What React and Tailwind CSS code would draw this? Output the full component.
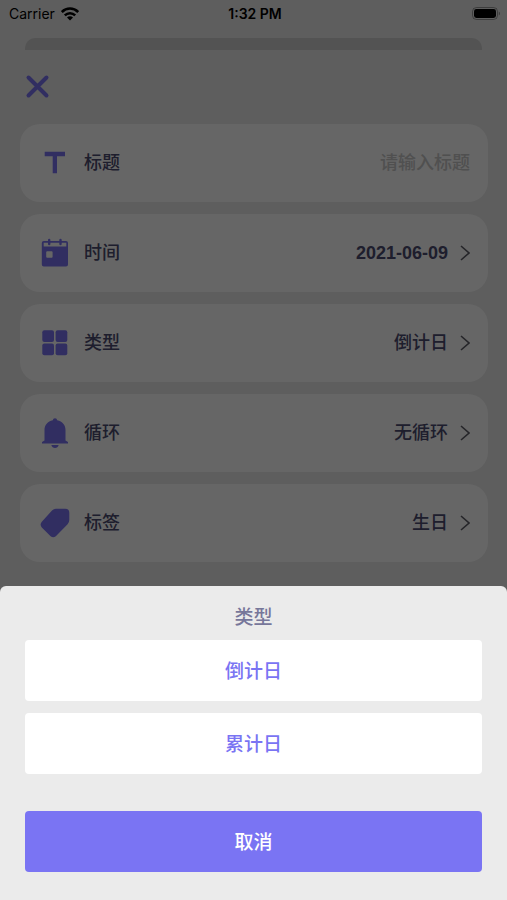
import { useState } from 'react'

function WifiIcon() {
  return (
    <svg width="18" height="14" viewBox="0 0 18 14" fill="none" aria-hidden>
      <path d="M0.8 5C5.4 0.4 12.6 0.4 17.2 5" stroke="#000" strokeWidth="2.6" />
      <path d="M3.8 8.3C6.7 5.4 11.3 5.4 14.2 8.3" stroke="#000" strokeWidth="2.5" />
      <path d="M9 13.4L6 10.4C7.7 8.8 10.3 8.8 12 10.4Z" fill="#000" />
    </svg>
  )
}

function BatteryIcon() {
  return (
    <svg width="30" height="14" viewBox="0 0 30 14" fill="none" aria-hidden>
      <rect x="1.5" y="0.5" width="25" height="12" rx="4" stroke="#000" strokeOpacity="0.35" />
      <rect x="3" y="2" width="22" height="9" rx="2.4" fill="#000" />
      <path d="M27.8 4.5C29.3 5 29.3 8 27.8 8.5Z" fill="#000" fillOpacity="0.4" />
    </svg>
  )
}

function TitleIcon() {
  return (
    <svg width="30" height="30" viewBox="0 0 30 30" fill="currentColor" aria-hidden>
      <path d="M4.7 3.8H25V8.2H17V25.2H12.7V8.2H4.7Z" />
    </svg>
  )
}

function CalendarIcon() {
  return (
    <svg width="30" height="30" viewBox="0 0 30 30" fill="currentColor" aria-hidden>
      <path
        fillRule="evenodd"
        d="M3.8 3H8V2A1.2 1.2 0 0 1 10.4 2V3H19.3V2A1.2 1.2 0 0 1 21.7 2V3H26A2 2 0 0 1 28 5V26.5A2 2 0 0 1 26 28.5H3.8A2 2 0 0 1 1.8 26.5V5A2 2 0 0 1 3.8 3ZM3.7 4.8V8.4H26.3V4.8H21.7V6A1.2 1.2 0 0 1 19.3 6V4.8H10.4V6A1.2 1.2 0 0 1 8 6V4.8ZM7.2 13.2A1 1 0 0 0 6.2 14.2V18.8A1 1 0 0 0 7.2 19.8H11.6A1 1 0 0 0 12.6 18.8V14.2A1 1 0 0 0 11.6 13.2Z"
      />
    </svg>
  )
}

function GridIcon() {
  return (
    <svg width="30" height="30" viewBox="0 0 30 30" fill="currentColor" aria-hidden>
      <rect x="2.3" y="2.3" width="11.7" height="11.7" rx="2" />
      <rect x="15.6" y="2.3" width="11.7" height="11.7" rx="2" />
      <rect x="2.3" y="15.5" width="11.7" height="11.7" rx="2" />
      <rect x="15.6" y="15.5" width="11.7" height="11.7" rx="2" />
    </svg>
  )
}

function BellIcon() {
  return (
    <svg width="30" height="30" viewBox="0 0 30 30" fill="currentColor" aria-hidden>
      <path d="M15 0.2A2.2 2.2 0 0 1 17.2 2.2C22.4 3.3 25.5 7 25.5 12V22.4L28 24V25.6H2V24L4.5 22.4V12C4.5 7 7.6 3.3 12.8 2.2A2.2 2.2 0 0 1 15 0.2Z" />
      <path d="M11.3 27H18.7C18.2 29 16.8 30 15 30S11.8 29 11.3 27Z" />
    </svg>
  )
}

function TagIcon() {
  return (
    <svg width="30" height="30" viewBox="0 0 30 30" fill="currentColor" aria-hidden>
      <path d="M16 0.7H25.3A4 4 0 0 1 29.3 4.7V12Q29.3 14.4 27.6 16.2L15.8 28.2Q13.2 30.4 10.6 28.2L1.8 19.4Q-0.6 16.6 1.8 13.8L12 2.6Q13.7 0.7 16 0.7Z" />
    </svg>
  )
}

function Chevron() {
  return (
    <svg width="10" height="16" viewBox="0 0 10 16" fill="none" aria-hidden>
      <path d="M1 1L9 8L1 15" stroke="#5d5d66" strokeWidth="1.6" />
    </svg>
  )
}

const cardClass =
  'flex h-[78px] w-full items-center rounded-[20px] bg-white pr-[18px] pl-5 text-lg leading-6'

function PickerRow({ icon, label, value, onClick }) {
  return (
    <button type="button" onClick={onClick} className={cardClass}>
      <span className="text-[#7a74f3]">{icon}</span>
      <span className="ml-[14px] font-medium text-[#4b4b70]">{label}</span>
      <span className="mr-3 ml-auto text-[#4b4b70]">{value}</span>
      <Chevron />
    </button>
  )
}

function TypeSheet({ options, onSelect, onClose }) {
  return (
    <div className="fixed inset-0 z-10 flex flex-col justify-end bg-black/60">
      <div
        role="dialog"
        aria-modal="true"
        aria-labelledby="type-sheet-title"
        className="rounded-t-md bg-[#ebebeb] px-[25px] pt-[18px] pb-7"
      >
        <h2
          id="type-sheet-title"
          className="text-center text-[19px] leading-7 font-medium text-[#77779a]"
        >
          类型
        </h2>
        <div className="mt-2 flex flex-col gap-3">
          {options.map((option) => (
            <button
              key={option}
              type="button"
              onClick={() => onSelect(option)}
              className="h-[61px] rounded bg-white pt-1 text-[19px] font-medium text-[#7a74f3]"
            >
              {option}
            </button>
          ))}
        </div>
        <button
          type="button"
          onClick={onClose}
          className="mt-[37px] h-[61px] w-full rounded bg-[#7a74f3] pt-1 text-[19px] font-medium text-white"
        >
          取消
        </button>
      </div>
    </div>
  )
}

export default function App() {
  const [open, setOpen] = useState(true)
  const [type, setType] = useState('倒计日')

  return (
    <div className="min-h-screen bg-[#ebebeb] font-['Liberation_Sans','Noto_Sans_CJK_SC',sans-serif]">
      <header className="grid h-7 grid-cols-3 items-center pr-[6px] pl-[9px] font-[Inter,sans-serif] text-sm text-black">
        <div className="flex items-center gap-[6px]">
          <span>Carrier</span>
          <WifiIcon />
        </div>
        <span className="text-center font-semibold">1:32 PM</span>
        <div className="flex justify-end">
          <BatteryIcon />
        </div>
      </header>

      <div className="mx-[25px] mt-[10px] h-3 rounded-t-[10px] bg-[#cfcfcf]" />

      <main className="pt-6 pr-[19px] pl-5">
        <button type="button" aria-label="关闭" className="ml-[5px] block text-[#7a74f3]">
          <svg width="25" height="25" viewBox="0 0 25 25" fill="none" aria-hidden>
            <path
              d="M3.5 3.5L21.5 21.5M21.5 3.5L3.5 21.5"
              stroke="currentColor"
              strokeWidth="4"
              strokeLinecap="round"
            />
          </svg>
        </button>

        <div className="mt-[25px] flex flex-col gap-3">
          <div className={cardClass}>
            <span className="text-[#7a74f3]">
              <TitleIcon />
            </span>
            <label htmlFor="title" className="ml-[14px] shrink-0 font-medium text-[#4b4b70]">
              标题
            </label>
            <input
              id="title"
              type="text"
              placeholder="请输入标题"
              className="ml-4 min-w-0 flex-1 bg-transparent text-right font-medium text-[#4b4b70] outline-none placeholder:text-[#c7c7c7]"
            />
          </div>
          <PickerRow
            icon={<CalendarIcon />}
            label="时间"
            value={<time className="font-bold">2021-06-09</time>}
          />
          <PickerRow
            icon={<GridIcon />}
            label="类型"
            value={<span className="font-medium">{type}</span>}
            onClick={() => setOpen(true)}
          />
          <PickerRow
            icon={<BellIcon />}
            label="循环"
            value={<span className="font-medium">无循环</span>}
          />
          <PickerRow
            icon={<TagIcon />}
            label="标签"
            value={<span className="font-medium">生日</span>}
          />
        </div>
      </main>

      {open && (
        <TypeSheet
          options={['倒计日', '累计日']}
          onSelect={(option) => {
            setType(option)
            setOpen(false)
          }}
          onClose={() => setOpen(false)}
        />
      )}
    </div>
  )
}
